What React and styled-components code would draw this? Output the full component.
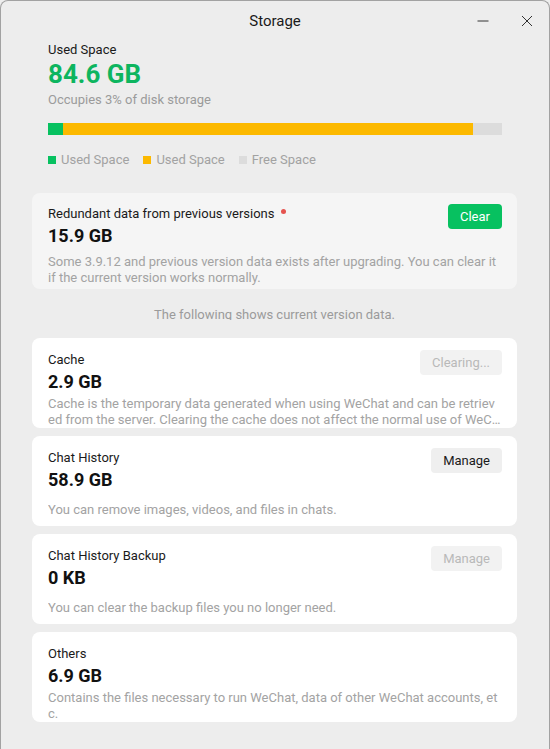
import React from "react";
import styled, { createGlobalStyle, css } from "styled-components";

const GlobalStyle = createGlobalStyle`
  * { box-sizing: border-box; }
  body {
    margin: 0;
    background: #ededed;
    font-family: Roboto, "Noto Sans", Arial, sans-serif;
    -webkit-font-smoothing: antialiased;
  }
`;

const Window = styled.div`
  width: 550px;
  height: 749px;
  background: #ededed;
  border: 1px solid #a2a2a2;
  border-bottom: none;
  border-radius: 8px 8px 0 0;
  overflow: hidden;
  display: flex;
  flex-direction: column;
`;

const TitleBar = styled.header`
  height: 40px;
  display: grid;
  grid-template-columns: 1fr auto 1fr;
  align-items: center;
`;

const Title = styled.h1`
  grid-column: 2;
  margin: 0;
  font-size: 15px;
  font-weight: 400;
  color: #1a1a1a;
  line-height: 20px;
`;

const Controls = styled.div`
  justify-self: end;
  display: flex;
  height: 100%;
`;

const ControlButton = styled.button`
  width: 44px;
  height: 100%;
  border: none;
  background: transparent;
  padding: 0;
  display: flex;
  align-items: center;
  justify-content: center;
  color: #333;
`;

const Content = styled.main`
  padding: 0 32px 0 31px;
  display: flex;
  flex-direction: column;
`;

const Summary = styled.section`
  padding: 0 15px 0 16px;
`;

const Label = styled.div`
  font-size: 13px;
  line-height: 18px;
  color: #1a1a1a;
`;

const BigValue = styled.div`
  font-size: 26px;
  font-weight: 700;
  line-height: 30px;
  color: #0db55f;
`;

const SubText = styled.div`
  margin-top: 2px;
  font-size: 13px;
  line-height: 18px;
  color: #9b9b9b;
`;

const Bar = styled.div`
  margin-top: 14px;
  height: 12px;
  display: flex;
  background: #dcdcdc;
`;

const Segment = styled.div`
  width: ${(p) => p.$w}%;
  background: ${(p) => p.$color};
`;

const Legend = styled.div`
  margin-top: 16px;
  display: flex;
  gap: 14px;
  font-size: 13px;
  line-height: 18px;
  color: #a2a2a2;
`;

const LegendItem = styled.span`
  display: flex;
  align-items: center;
  gap: 5px;
  &::before {
    content: "";
    width: 8px;
    height: 8px;
    background: ${(p) => p.$color};
  }
`;

const CardList = styled.div`
  display: flex;
  flex-direction: column;
  gap: 8px;
`;

const Card = styled.section`
  height: ${(p) => (p.$legacy ? 96 : 90)}px;
  padding: ${(p) => (p.$legacy ? 12 : 13)}px 16px 0;
  border-radius: 8px;
  background: ${(p) => (p.$legacy ? "#f5f5f5" : "#ffffff")};
  overflow: hidden;
  margin-top: ${(p) => (p.$legacy ? 24 : 0)}px;
`;

const CardHead = styled.div`
  display: flex;
  justify-content: space-between;
  align-items: flex-start;
`;

const CardTitle = styled.div`
  font-size: 13px;
  line-height: 18px;
  color: #1a1a1a;
`;

const Dot = styled.span`
  display: inline-block;
  width: 5px;
  height: 5px;
  border-radius: 50%;
  background: #e5534f;
  margin-left: 7px;
  vertical-align: 4px;
`;

const CardValue = styled.div`
  margin-top: 1px;
  font-size: 18px;
  font-weight: 700;
  line-height: 24px;
  color: #111;
`;

const Desc = styled.div`
  margin-top: ${(p) => (p.$legacy ? 6 : 2)}px;
  height: 32px;
  display: flex;
  align-items: center;
`;

const DescText = styled.p`
  margin: 0;
  font-size: 13px;
  line-height: 16px;
  color: #a3a3a3;
  word-break: break-all;
  display: -webkit-box;
  -webkit-box-orient: vertical;
  -webkit-line-clamp: 2;
  overflow: hidden;
`;

const variants = {
  primary: css`
    background: #07c160;
    color: #fff;
  `,
  default: css`
    background: #efefef;
    color: #1a1a1a;
  `,
  disabled: css`
    background: #f2f2f2;
    color: #b9b9b9;
  `,
};

const ActionButton = styled.button`
  flex: none;
  height: 25px;
  margin: -1px -1px 0 0;
  padding: 0 12px;
  border: none;
  border-radius: 4px;
  font-family: inherit;
  font-size: 13px;
  line-height: 25px;
  ${(p) => variants[p.$variant]}
`;

const Note = styled.div`
  margin: 17px 0 18px;
  height: 14px;
  overflow: hidden;
  text-align: center;
  font-size: 13px;
  line-height: 18px;
  color: #9b9b9b;
`;

const MinimizeIcon = () => (
  <svg width="12" height="12" viewBox="0 0 12 12">
    <path d="M0.5 6h11" stroke="currentColor" strokeWidth="1" />
  </svg>
);

const CloseIcon = () => (
  <svg width="12" height="12" viewBox="0 0 12 12">
    <path d="M1 1l10 10M11 1L1 11" stroke="currentColor" strokeWidth="1" />
  </svg>
);

const items = [
  {
    title: "Cache",
    value: "2.9 GB",
    action: "Clearing...",
    variant: "disabled",
    desc: "Cache is the temporary data generated when using WeChat and can be retrieved from the server. Clearing the cache does not affect the normal use of WeChat.",
  },
  {
    title: "Chat History",
    value: "58.9 GB",
    action: "Manage",
    variant: "default",
    desc: "You can remove images, videos, and files in chats.",
  },
  {
    title: "Chat History Backup",
    value: "0 KB",
    action: "Manage",
    variant: "disabled",
    desc: "You can clear the backup files you no longer need.",
  },
  {
    title: "Others",
    value: "6.9 GB",
    desc: "Contains the files necessary to run WeChat, data of other WeChat accounts, etc.",
  },
];

function StorageCard({ title, value, action, variant, desc, legacy, dot }) {
  return (
    <Card $legacy={legacy}>
      <CardHead>
        <div>
          <CardTitle>
            {title}
            {dot && <Dot />}
          </CardTitle>
          <CardValue>{value}</CardValue>
        </div>
        {action && <ActionButton $variant={variant}>{action}</ActionButton>}
      </CardHead>
      <Desc $legacy={legacy}>
        <DescText>{desc}</DescText>
      </Desc>
    </Card>
  );
}

export default function App() {
  return (
    <>
      <GlobalStyle />
      <Window>
        <TitleBar>
          <Title>Storage</Title>
          <Controls>
            <ControlButton aria-label="Minimize">
              <MinimizeIcon />
            </ControlButton>
            <ControlButton aria-label="Close">
              <CloseIcon />
            </ControlButton>
          </Controls>
        </TitleBar>
        <Content>
          <Summary>
            <Label>Used Space</Label>
            <BigValue>84.6 GB</BigValue>
            <SubText>Occupies 3% of disk storage</SubText>
            <Bar>
              <Segment $w={3.3} $color="#07c160" />
              <Segment $w={90.4} $color="#fcb900" />
            </Bar>
            <Legend>
              <LegendItem $color="#07c160">Used Space</LegendItem>
              <LegendItem $color="#fcb900">Used Space</LegendItem>
              <LegendItem $color="#dcdcdc">Free Space</LegendItem>
            </Legend>
          </Summary>
          <StorageCard
            legacy
            dot
            title="Redundant data from previous versions"
            value="15.9 GB"
            action="Clear"
            variant="primary"
            desc="Some 3.9.12 and previous version data exists after upgrading. You can clear it if the current version works normally."
          />
          <Note>The following shows current version data.</Note>
          <CardList>
            {items.map((it) => (
              <StorageCard key={it.title} {...it} />
            ))}
          </CardList>
        </Content>
      </Window>
    </>
  );
}
